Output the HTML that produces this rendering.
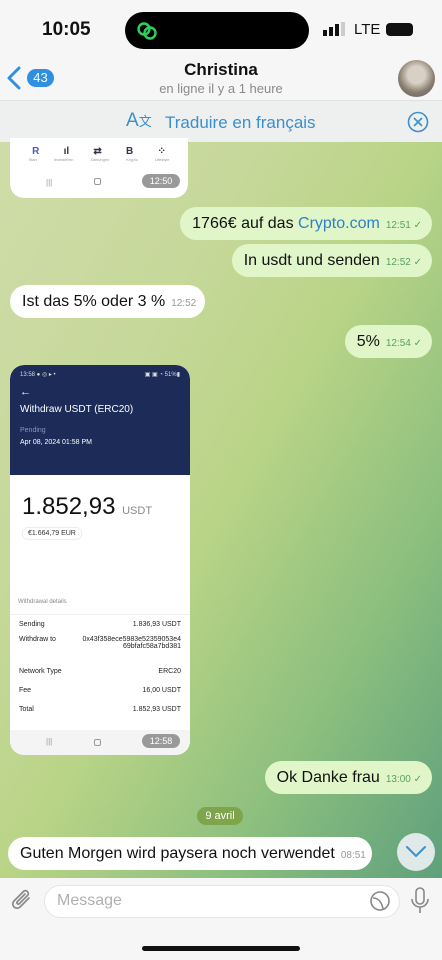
<!DOCTYPE html>
<html><head><meta charset="utf-8"><style>
*{margin:0;padding:0;box-sizing:border-box}
body{width:442px;height:960px;overflow:hidden;font-family:"Liberation Sans",sans-serif;position:relative;background:#f6f6f6}
.chat{position:absolute;left:0;top:142px;width:442px;height:736px;background:linear-gradient(120deg,#cfdca8 0%,#c6d89a 30%,#b9d486 50%,#8cbf7e 75%,#5fa07c 100%)}
.abs{position:absolute}
.out{position:absolute;right:10px;background:#e0f6c8;border-radius:17px;height:33px;font-size:16px;color:#111;padding:8px 10px 8px 12px;white-space:nowrap}
.in{position:absolute;background:#fff;border-radius:17px;height:33px;font-size:16px;color:#111;padding:8px 12px;white-space:nowrap}
.t{font-size:10px;color:#5aa060;margin-left:6px}
.ti{font-size:10px;color:#999;margin-left:6px}
.row{display:flex;justify-content:space-between;font-size:7px;color:#222;padding:0 9px;height:19px;align-items:center}
</style></head><body>
<div class="abs" style="left:42px;top:19px;font-size:19px;font-weight:bold;color:#111">10:05</div>
<div class="abs" style="left:125px;top:12px;width:184px;height:37px;background:#000;border-radius:19px"></div>
<svg class="abs" style="left:136px;top:20px" width="22" height="22" viewBox="0 0 22 22"><circle cx="8" cy="9" r="5.5" fill="none" stroke="#2fd15a" stroke-width="2.4"/><circle cx="14" cy="13" r="5.5" fill="none" stroke="#2fd15a" stroke-width="2.4"/></svg>
<div class="abs" style="left:323px;top:30px;width:4px;height:6px;background:#111"></div>
<div class="abs" style="left:329px;top:27px;width:4px;height:9px;background:#111"></div>
<div class="abs" style="left:335px;top:24px;width:4px;height:12px;background:#111"></div>
<div class="abs" style="left:341px;top:22px;width:4px;height:14px;background:#ccc"></div>
<div class="abs" style="left:354px;top:21px;font-size:15px;color:#111">LTE</div>
<div class="abs" style="left:386px;top:23px;width:27px;height:13px;background:#111;border-radius:4px"></div>
<svg class="abs" style="left:6px;top:66px" width="16" height="24" viewBox="0 0 16 24"><path d="M13 2 L3 12 L13 22" fill="none" stroke="#2f8fe0" stroke-width="3" stroke-linecap="round" stroke-linejoin="round"/></svg>
<div class="abs" style="left:27px;top:69px;width:27px;height:18px;background:#2f8fe0;border-radius:9px;color:#fff;font-size:13px;text-align:center;line-height:18px">43</div>
<div class="abs" style="left:0;top:60px;width:442px;text-align:center;font-size:17px;font-weight:bold;color:#111">Christina</div>
<div class="abs" style="left:0;top:81px;width:442px;text-align:center;font-size:13px;color:#8a8a8a">en ligne il y a 1 heure</div>
<div class="abs" style="left:398px;top:60px;width:37px;height:37px;border-radius:50%;background:radial-gradient(circle at 50% 40%,#d8d0c4 0 30%,#8a7e72 60%,#5b5550)"></div>
<div class="abs" style="left:0;top:100px;width:442px;height:42px;background:#eef0ef;border-top:1px solid #e0e0e0"></div>
<div class="abs" style="left:126px;top:110px;font-size:19px;color:#3a8fd0">A<span style="font-size:13px">文</span></div>
<div class="abs" style="left:165px;top:113px;font-size:17px;color:#3a8fd0">Traduire en français</div>
<svg class="abs" style="left:407px;top:111px" width="22" height="22" viewBox="0 0 22 22"><circle cx="11" cy="11" r="9.5" fill="none" stroke="#3a8fd0" stroke-width="1.6"/><path d="M7 7 L15 15 M15 7 L7 15" stroke="#3a8fd0" stroke-width="1.6"/></svg>
<div class="chat">
<div class="abs" style="left:10px;top:-4px;width:178px;height:60px;background:#fff;border-radius:0 0 14px 14px">
<div style="display:flex;justify-content:space-around;padding:8px 10px 0;font-size:10px;color:#334;font-weight:bold"><span style="color:#4a5fb0">R</span><span>ıl</span><span>⇄</span><span>B</span><span>⁘</span></div>
<div style="display:flex;justify-content:space-around;padding:0 10px;font-size:4px;color:#999"><span>Start</span><span>Investieren</span><span>Zahlungen</span><span>Krypto</span><span>Lifestyle</span></div>
<div class="abs" style="left:36px;top:40px;font-size:8px;color:#999">|||</div>
<div class="abs" style="left:84px;top:40px;width:7px;height:7px;border:1px solid #999;border-radius:2px"></div>
<div class="abs" style="left:132px;top:36px;width:38px;height:14px;background:#999;border-radius:7px;color:#fff;font-size:9px;text-align:center;line-height:14px">12:50</div>
</div>
<div class="out" style="top:65px">1766€ auf das <span style="color:#2f7fc8">Crypto.com</span><span class="t">12:51 ✓</span></div>
<div class="out" style="top:102px">In usdt und senden<span class="t">12:52 ✓</span></div>
<div class="in" style="left:10px;top:143px;width:195px">Ist das 5% oder 3 %<span class="ti">12:52</span></div>
<div class="out" style="top:183px">5%<span class="t">12:54 ✓</span></div>
<div class="abs" style="left:10px;top:223px;width:180px;height:390px;background:#fff;border-radius:14px;overflow:hidden">
<div style="position:absolute;left:0;top:0;width:180px;height:110px;background:#1c2b58;border-radius:14px 14px 0 0;color:#fff">
<div style="font-size:6px;padding:6px 10px;color:#ddd">13:58 ● ◎ ▸ •<span style="float:right">▣ ▣ ◔ 51%▮</span></div>
<div style="font-size:11px;padding:2px 10px">←</div>
<div style="font-size:10px;padding:4px 10px">Withdraw USDT (ERC20)</div>
<div style="font-size:7px;padding:8px 10px 0;color:#8897bb">Pending</div>
<div style="font-size:7px;padding:5px 10px">Apr 08, 2024 01:58 PM</div>
</div>
<div style="position:absolute;left:12px;top:128px;font-size:24px;color:#111">1.852,93 <span style="font-size:11px;color:#888">USDT</span></div>
<div style="position:absolute;left:12px;top:162px;font-size:7px;color:#333;border:1px solid #eee;border-radius:6px;padding:2px 5px">€1.664,79 EUR</div>
<div style="position:absolute;left:8px;top:234px;font-size:6px;color:#888">Withdrawal details</div>
<div style="position:absolute;left:0;top:249px;width:180px;border-top:1px solid #f0f0f0">
<div class="row"><span>Sending</span><span>1.836,93 USDT</span></div>
<div class="row" style="height:28px;align-items:flex-start;padding-top:2px"><span>Withdraw to</span><span style="text-align:right">0x43f358ece5983e52359053e4<br>69bfafc58a7bd381</span></div>
<div class="row"><span>Network Type</span><span>ERC20</span></div>
<div class="row"><span>Fee</span><span>16,00 USDT</span></div>
<div class="row"><span>Total</span><span>1.852,93 USDT</span></div>
</div>
<div style="position:absolute;left:0;top:365px;width:180px;height:25px;background:#f4f4f4"></div>
<div class="abs" style="left:36px;top:372px;font-size:8px;color:#999">|||</div>
<div class="abs" style="left:84px;top:374px;width:7px;height:7px;border:1px solid #999;border-radius:2px"></div>
<div class="abs" style="left:132px;top:369px;width:38px;height:14px;background:#999;border-radius:7px;color:#fff;font-size:9px;text-align:center;line-height:14px">12:58</div>
</div>
<div class="out" style="top:619px">Ok Danke frau<span class="t">13:00 ✓</span></div>
<div class="abs" style="left:197px;top:665px;width:46px;height:18px;background:#7ea44c;border-radius:9px;color:#fff;font-size:11px;text-align:center;line-height:18px">9 avril</div>
<div class="in" style="left:8px;top:695px;width:364px">Guten Morgen wird paysera noch verwendet<span class="ti">08:51</span></div>
<div class="abs" style="left:397px;top:691px;width:38px;height:38px;border-radius:50%;background:#dfe9e8"></div>
<svg class="abs" style="left:405px;top:703px" width="22" height="14" viewBox="0 0 22 14"><path d="M2 2 L11 11 L20 2" fill="none" stroke="#3a8fd0" stroke-width="2" stroke-linecap="round"/></svg>
</div>
<svg class="abs" style="left:10px;top:888px" width="26" height="26" viewBox="0 0 26 26"><path d="M19 10 L10 19 a4 4 0 0 1 -6 -6 L14 3 a3 3 0 0 1 4 4 L9 16 a1.5 1.5 0 0 1 -2 -2 L15 6" fill="none" stroke="#8a8a8a" stroke-width="1.7" stroke-linecap="round"/></svg>
<div class="abs" style="left:44px;top:885px;width:356px;height:33px;background:#fff;border-radius:17px;border:1px solid #e4e4e4"></div>
<div class="abs" style="left:57px;top:892px;font-size:16px;color:#b0b0b0">Message</div>
<svg class="abs" style="left:369px;top:890px" width="22" height="22" viewBox="0 0 22 22"><circle cx="11" cy="11" r="9" fill="none" stroke="#888" stroke-width="1.6"/><path d="M4 8 Q12 8 14 19" fill="none" stroke="#888" stroke-width="1.6"/></svg>
<svg class="abs" style="left:409px;top:886px" width="22" height="30" viewBox="0 0 22 30"><rect x="7" y="2" width="8" height="16" rx="4" fill="none" stroke="#888" stroke-width="1.6"/><path d="M3 13 a8 8 0 0 0 16 0 M11 21 V27" fill="none" stroke="#888" stroke-width="1.6"/></svg>
<div class="abs" style="left:142px;top:946px;width:158px;height:5px;background:#111;border-radius:3px"></div>
</body></html>
